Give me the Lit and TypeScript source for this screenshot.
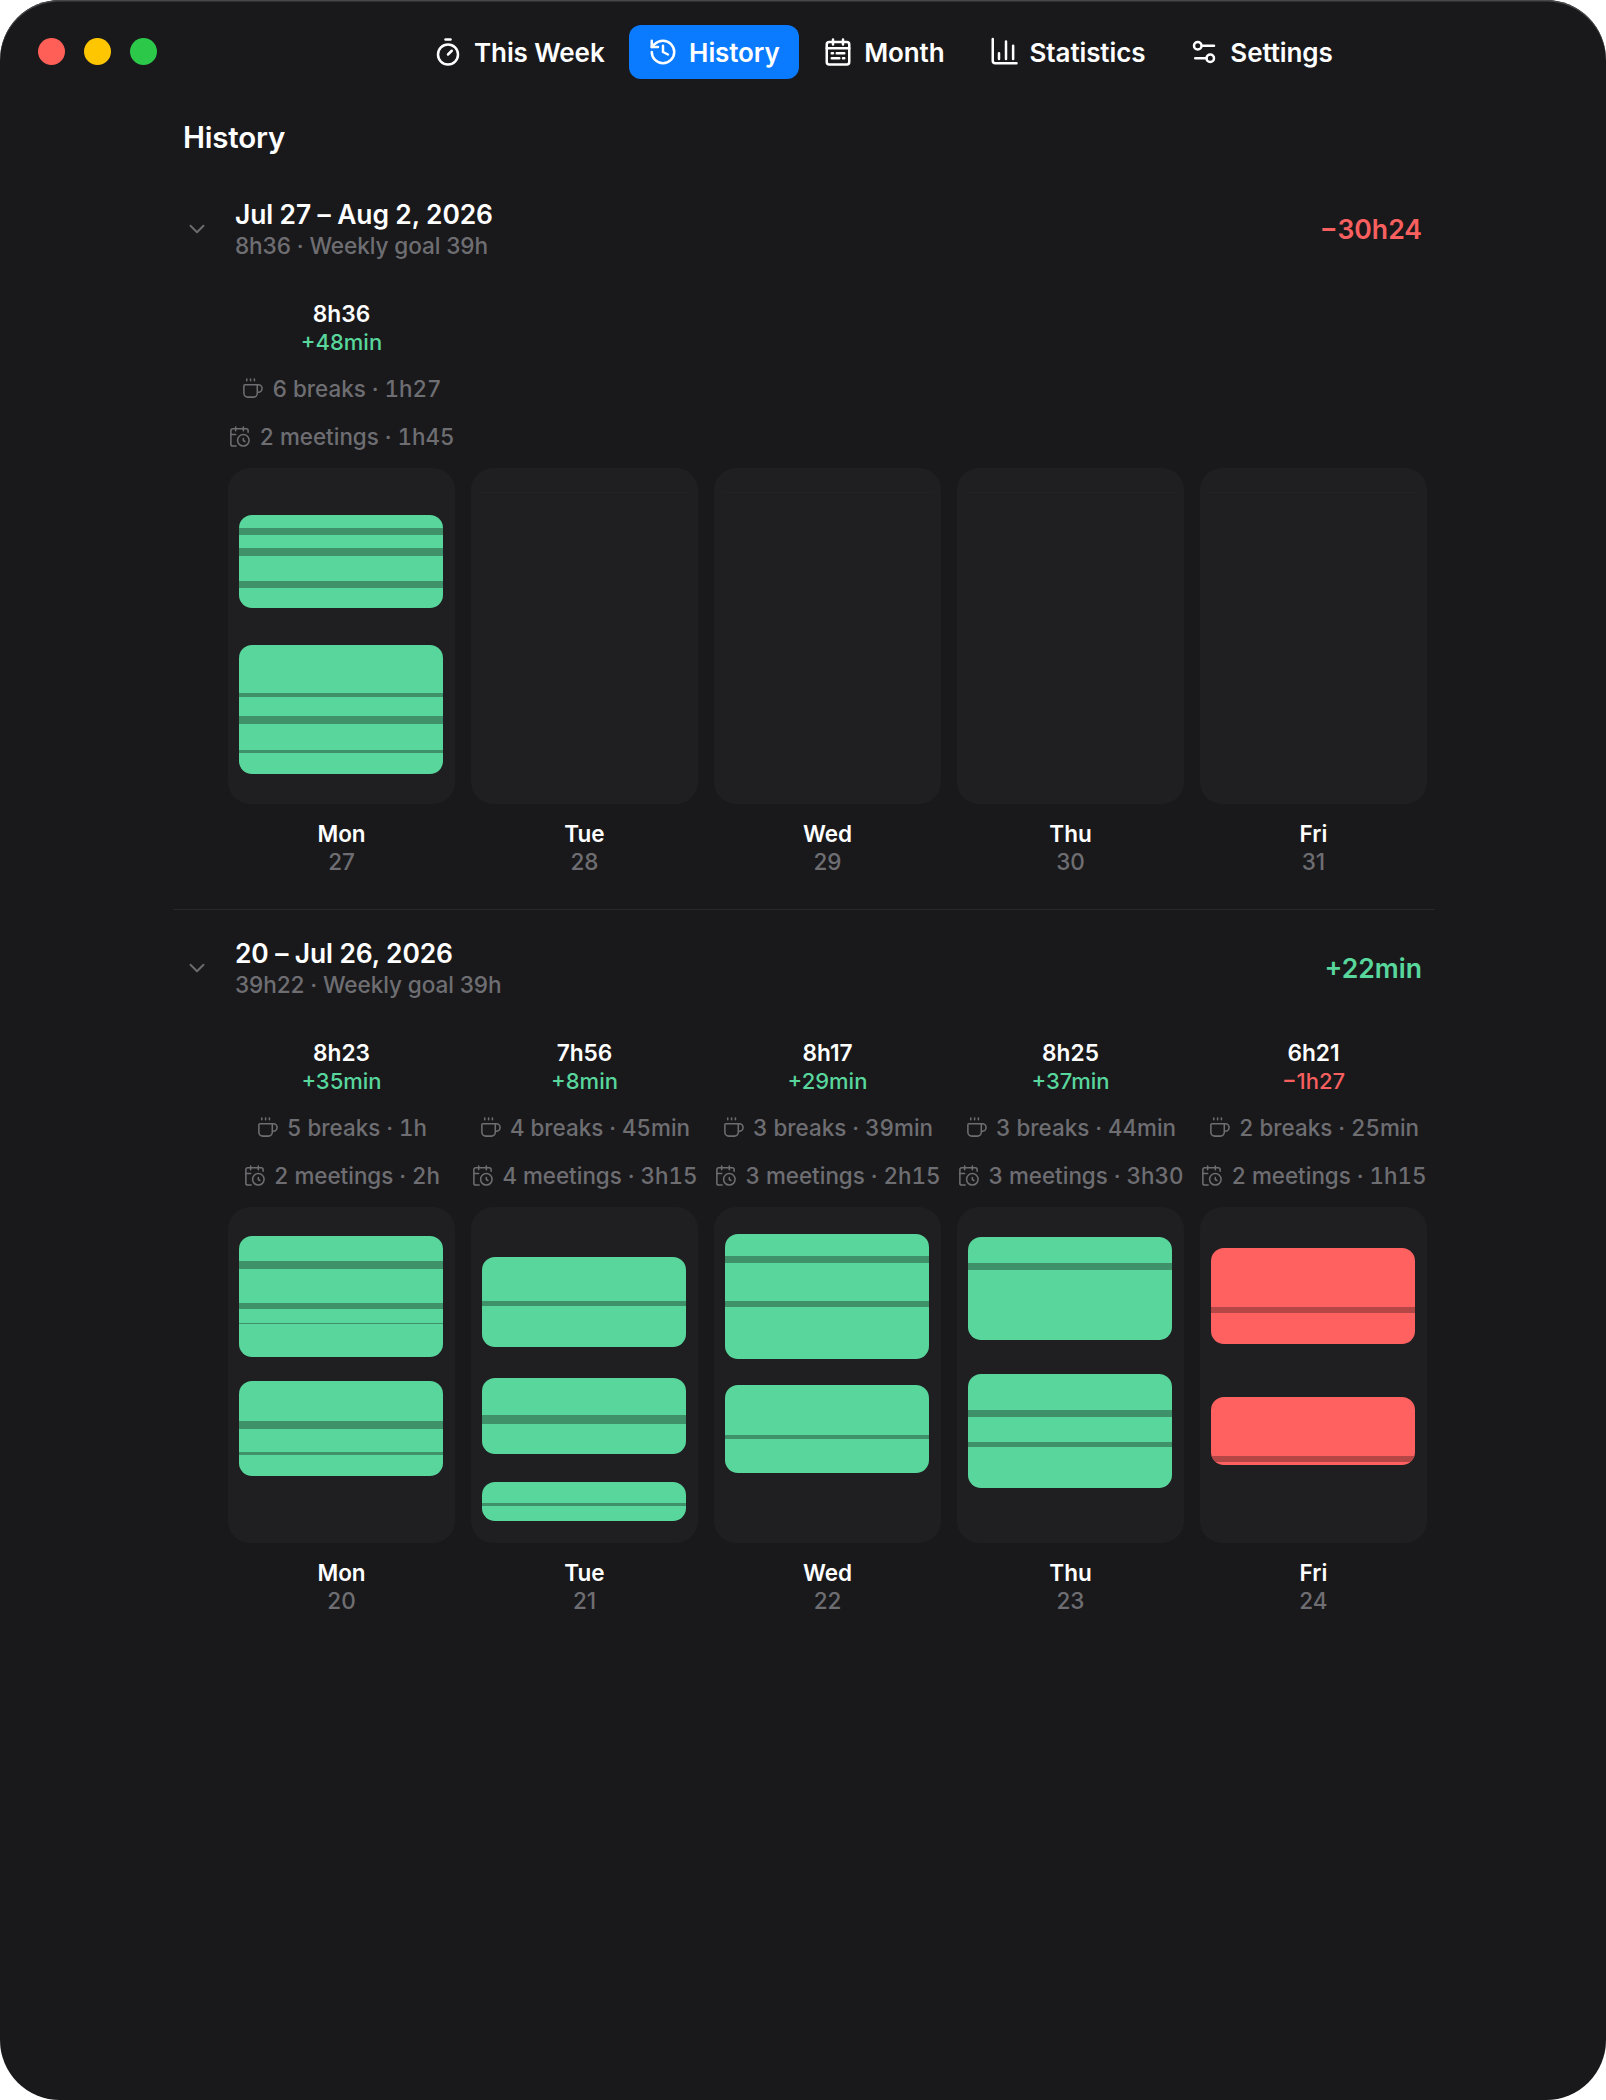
import { LitElement, html, css, svg } from "lit";
import { customElement } from "lit/decorators.js";

const icons: Record<string, any> = {
  timer: svg`<line x1="10" x2="14" y1="2" y2="2"/><line x1="12" x2="15" y1="14" y2="11"/><circle cx="12" cy="14" r="8"/>`,
  history: svg`<path d="M3 12a9 9 0 1 0 9-9 9.75 9.75 0 0 0-6.74 2.74L3 8"/><path d="M3 3v5h5"/><path d="M12 7v5l4 2"/>`,
  month: svg`<rect x="3" y="4" width="18" height="18" rx="2"/><path d="M8 2v4M16 2v4M3 9h18M7 13h1M11 13h6M7 17h6M16 17h1"/>`,
  stats: svg`<path d="M3 1.500v17.500a2 2 0 0 0 2 2h17"/><path d="M8 17.500V13M13.600 17.500V3.500M19.300 17.500V7"/>`,
  settings: svg`<path d="M20 7h-9"/><path d="M14 17H5"/><circle cx="17" cy="17" r="3"/><circle cx="7" cy="7" r="3"/>`,
  coffee: svg`<path d="M10 2v2"/><path d="M14 2v2"/><path d="M16 8a1 1 0 0 1 1 1v8a4 4 0 0 1-4 4H7a4 4 0 0 1-4-4V9a1 1 0 0 1 1-1h14a4 4 0 1 1 0 8h-1"/><path d="M6 2v2"/>`,
  meeting: svg`<path d="M16 14v2.2l1.6 1"/><path d="M16 2v4"/><path d="M21 7.5V6a2 2 0 0 0-2-2H5a2 2 0 0 0-2 2v14a2 2 0 0 0 2 2h3.5"/><path d="M3 10h5"/><path d="M8 2v4"/><circle cx="16" cy="16" r="6"/>`,
  chevron: svg`<path d="m6 9 6 6 6-6"/>`,
};
const icon = (n: string, cls = "") =>
  html`<svg class="ic ${cls}" viewBox="0 0 24 24" fill="none" stroke="currentColor" stroke-linecap="round" stroke-linejoin="round">${icons[n]}</svg>`;

type Bar = { top: number; h: number; stripes: [number, number][] };
type Day = { name: string; num: string; total?: string; delta?: string; neg?: boolean; breaks?: string; meetings?: string; bars: Bar[] };
type Week = { title: string; sub: string; diff: string; neg: boolean; days: Day[] };

const weeks: Week[] = [
  {
    title: "Jul 27 – Aug 2, 2026", sub: "8h36 · Weekly goal 39h", diff: "−30h24", neg: true,
    days: [
      { name: "Mon", num: "27", total: "8h36", delta: "+48min", breaks: "6 breaks · 1h27", meetings: "2 meetings · 1h45",
        bars: [
          { top: 47, h: 93, stripes: [[13, 7], [33, 8], [66, 7]] },
          { top: 177, h: 129, stripes: [[48, 4], [71, 8], [105, 3]] },
        ] },
      { name: "Tue", num: "28", bars: [] },
      { name: "Wed", num: "29", bars: [] },
      { name: "Thu", num: "30", bars: [] },
      { name: "Fri", num: "31", bars: [] },
    ],
  },
  {
    title: "20 – Jul 26, 2026", sub: "39h22 · Weekly goal 39h", diff: "+22min", neg: false,
    days: [
      { name: "Mon", num: "20", total: "8h23", delta: "+35min", breaks: "5 breaks · 1h", meetings: "2 meetings · 2h",
        bars: [
          { top: 29, h: 121, stripes: [[25, 8], [67, 6], [87, 1]] },
          { top: 174, h: 95, stripes: [[40, 8], [71, 3]] },
        ] },
      { name: "Tue", num: "21", total: "7h56", delta: "+8min", breaks: "4 breaks · 45min", meetings: "4 meetings · 3h15",
        bars: [
          { top: 50, h: 90, stripes: [[44, 5]] },
          { top: 171, h: 76, stripes: [[37, 9]] },
          { top: 275, h: 39, stripes: [[21, 3]] },
        ] },
      { name: "Wed", num: "22", total: "8h17", delta: "+29min", breaks: "3 breaks · 39min", meetings: "3 meetings · 2h15",
        bars: [
          { top: 27, h: 125, stripes: [[22, 7], [67, 6]] },
          { top: 178, h: 88, stripes: [[50, 4]] },
        ] },
      { name: "Thu", num: "23", total: "8h25", delta: "+37min", breaks: "3 breaks · 44min", meetings: "3 meetings · 3h30",
        bars: [
          { top: 30, h: 103, stripes: [[26, 7]] },
          { top: 167, h: 114, stripes: [[36, 7], [68, 5]] },
        ] },
      { name: "Fri", num: "24", total: "6h21", delta: "−1h27", neg: true, breaks: "2 breaks · 25min", meetings: "2 meetings · 1h15",
        bars: [
          { top: 41, h: 96, stripes: [[59, 6]] },
          { top: 190, h: 68, stripes: [[59, 6]] },
        ] },
    ],
  },
];

@customElement("app-root")
export class AppRoot extends LitElement {
  static styles = css`
    :host { display: block; width: 1606px; height: 2100px; background: #fff; font-family: Inter, "Liberation Sans", sans-serif; }
    .window { box-sizing: border-box; width: 1606px; height: 2100px; background: #19191c; border-radius: 60px; overflow: hidden;
      box-shadow: inset 0 1.5px 0 #48484b; display: flex; flex-direction: column; }
    .ic { display: block; flex: none; stroke-width: 2; }
    .top { position: relative; height: 119px; flex: none; display: flex; padding: 25px 0 0 413px; box-sizing: border-box; }
    .lights { position: absolute; left: 38px; top: 38px; display: flex; gap: 19px; }
    .light { width: 27px; height: 27px; border-radius: 50%; }
    .nav { display: flex; gap: 4px; height: 54px; }
    .tab { display: flex; align-items: center; gap: 11px; padding: 0 20px; border-radius: 12px; color: #fff; font-size: 26px; font-weight: 600; letter-spacing: -0.1px; white-space: nowrap; }
    .tab .ic { width: 30px; height: 30px; }
    .tab.on { background: #0a7aff; padding: 0 19.5px; }
    .content { padding: 0 171px 0 173px; }
    h1 { margin: 0; padding-left: 10px; font-size: 29.5px; font-weight: 600; color: #fff; line-height: 36px; letter-spacing: -0.2px; }
    .week { padding-top: 43px; }
    .week + .week { border-top: 1px solid #29292c; padding-top: 27.5px; margin-top: 33px; }
    .head { display: flex; align-items: center; padding: 0 13px 0 10px; }
    .chev { width: 26px; height: 26px; color: #6b6b6f; margin-left: 1px; stroke-width: 1.8; margin-top: 0; }
    .head-text { margin-left: 25px; flex: 1; }
    .title { color: #fff; font-size: 26.4px; font-weight: 600; line-height: 32px; letter-spacing: -0.1px; }
    .sub { color: #6e6e72; font-size: 22.6px; line-height: 28px; margin-top: 2px; font-weight: 500; letter-spacing: -0.1px; }
    .diff { font-size: 26.6px; font-weight: 600; }
    .good { color: #58d69c; }
    .bad { color: #f85f5f; }
    .grid { display: grid; grid-template-columns: repeat(5, 227px); column-gap: 16px; margin: 40px 0 0 55px; }
    .col { display: flex; flex-direction: column; align-items: center; min-width: 0; }
    .stats { height: 167.5px; display: flex; flex-direction: column; align-items: center; width: 100%; }
    .total { color: #fff; font-size: 22.7px; font-weight: 600; line-height: 28px; }
    .delta { font-size: 22px; line-height: 28px; font-weight: 500; }
    .line { display: flex; justify-content: center; align-items: center; gap: 8px; color: #6e6e72; font-size: 22.4px; font-weight: 500; line-height: 28px; white-space: nowrap; width: 100%; font-variant-numeric: tabular-nums; }
    .line .ic { width: 23px; height: 23px; stroke-width: 1.6; }
    .l1 { margin-top: 18.5px; }
    .l2 { margin-top: 20px; }
    .card { position: relative; width: 100%; height: 336px; background: #1f1f22; border-radius: 22px; overflow: hidden; }
    .card.empty::before { content: ""; position: absolute; left: 8px; right: 8px; top: 24px; height: 1px; background: #222225; }
    .bar { position: absolute; left: 11px; right: 12px; border-radius: 13px; overflow: hidden; }
    .bar.g { background: #58d69c; }
    .bar.r { background: #ff6161; }
    .stripe { position: absolute; left: 0; right: 0; }
    .bar.g .stripe { background: #3e9169; }
    .bar.r .stripe { background: #b54646; }
    .day { color: #fff; font-size: 22.5px; font-weight: 600; line-height: 28px; margin-top: 16px; }
    .num { color: #6e6e72; font-size: 22.5px; font-weight: 500; line-height: 28px; }
  `;

  private dayCol(d: Day) {
    return html`<div class="col">
      <div class="stats">
        ${d.total
          ? html`<div class="total">${d.total}</div>
              <div class="delta ${d.neg ? "bad" : "good"}">${d.delta}</div>
              <div class="line l1">${icon("coffee")}<span>${d.breaks}</span></div>
              <div class="line l2">${icon("meeting")}<span>${d.meetings}</span></div>`
          : ""}
      </div>
      <div class="card ${d.bars.length ? "" : "empty"}">
        ${d.bars.map(
          (b) => html`<div class="bar ${d.neg ? "r" : "g"}" style="top:${b.top}px;height:${b.h}px">
            ${b.stripes.map((s) => html`<div class="stripe" style="top:${s[0]}px;height:${s[1]}px"></div>`)}
          </div>`
        )}
      </div>
      <div class="day">${d.name}</div>
      <div class="num">${d.num}</div>
    </div>`;
  }

  render() {
    const tabs: [string, string][] = [["timer", "This Week"], ["history", "History"], ["month", "Month"], ["stats", "Statistics"], ["settings", "Settings"]];
    return html`<div class="window">
      <div class="top">
        <div class="lights">
          <div class="light" style="background:#ff5f57"></div>
          <div class="light" style="background:#fec600"></div>
          <div class="light" style="background:#2cc84a"></div>
        </div>
        <div class="nav">
          ${tabs.map((t) => html`<div class="tab ${t[1] === "History" ? "on" : ""}">${icon(t[0])}<span>${t[1]}</span></div>`)}
        </div>
      </div>
      <div class="content">
        <h1>History</h1>
        ${weeks.map(
          (w) => html`<section class="week">
            <div class="head">
              ${icon("chevron", "chev")}
              <div class="head-text">
                <div class="title">${w.title}</div>
                <div class="sub">${w.sub}</div>
              </div>
              <div class="diff ${w.neg ? "bad" : "good"}">${w.diff}</div>
            </div>
            <div class="grid">${w.days.map((d) => this.dayCol(d))}</div>
          </section>`
        )}
      </div>
    </div>`;
  }
}
